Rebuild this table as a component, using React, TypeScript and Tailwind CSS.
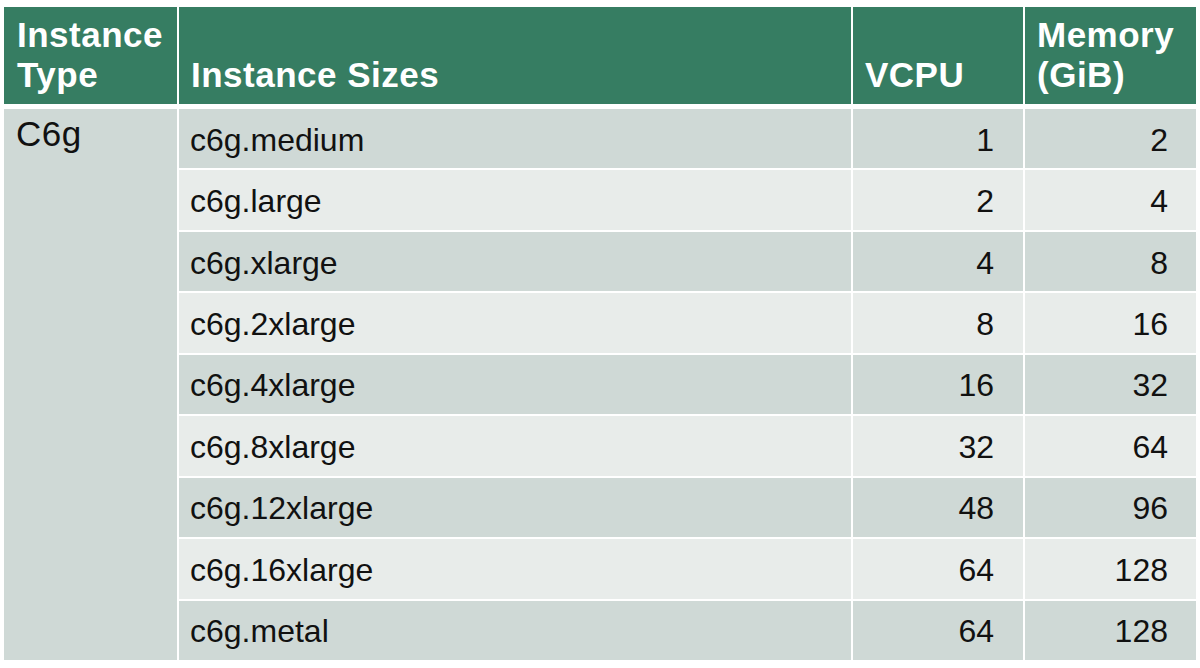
const rows = [
  { size: 'c6g.medium', vcpu: '1', mem: '2' },
  { size: 'c6g.large', vcpu: '2', mem: '4' },
  { size: 'c6g.xlarge', vcpu: '4', mem: '8' },
  { size: 'c6g.2xlarge', vcpu: '8', mem: '16' },
  { size: 'c6g.4xlarge', vcpu: '16', mem: '32' },
  { size: 'c6g.8xlarge', vcpu: '32', mem: '64' },
  { size: 'c6g.12xlarge', vcpu: '48', mem: '96' },
  { size: 'c6g.16xlarge', vcpu: '64', mem: '128' },
  { size: 'c6g.metal', vcpu: '64', mem: '128' },
]

// dark / light banding like the slide table
const band = (i: number) => (i % 2 === 0 ? 'bg-[#cfd9d6]' : 'bg-[#e8ecea]')

export default function App() {
  return (
    <main className="w-[1200px] h-[668px] bg-white pt-[7px] pl-[4px] font-[family-name:'Liberation_Sans',Arial,sans-serif] overflow-hidden">
      <div className="w-[1192px] flex flex-col gap-[5px]">
        {/* Header */}
        <div className="grid grid-cols-[173px_672px_170px_171px] gap-[2px] h-[97px] text-white font-bold text-[35px] leading-[40px] tracking-[0.5px]">
          <div className="bg-[#367d62] flex items-end pl-[13px] pb-[9px]">
            <span>Instance<br />Type</span>
          </div>
          <div className="bg-[#367d62] flex items-end pl-[12px] pb-[9px]">Instance Sizes</div>
          <div className="bg-[#367d62] flex items-end pl-[12px] pb-[9px]">VCPU</div>
          <div className="bg-[#367d62] flex items-end pl-[12px] pb-[9px]">
            <span>Memory<br />(GiB)</span>
          </div>
        </div>

        {/* Body */}
        <div className="grid grid-cols-[173px_672px_170px_171px] grid-rows-[repeat(9,minmax(0,1fr))] gap-[2px] h-[551px] text-[#111] text-[32px]">
          <div className="row-span-9 bg-[#cfd9d6] pl-[12px] pt-[7px] text-[35px] leading-none tracking-[0.5px]">C6g</div>
          {rows.map((r, i) => (
            <div key={r.size} className="contents">
              <div className={`${band(i)} col-start-2 flex items-center pl-[11px] pt-[2px]`}>{r.size}</div>
              <div className={`${band(i)} flex items-center justify-end pr-[29px] pt-[2px]`}>{r.vcpu}</div>
              <div className={`${band(i)} flex items-center justify-end pr-[28px] pt-[2px]`}>{r.mem}</div>
            </div>
          ))}
        </div>
      </div>
    </main>
  )
}
